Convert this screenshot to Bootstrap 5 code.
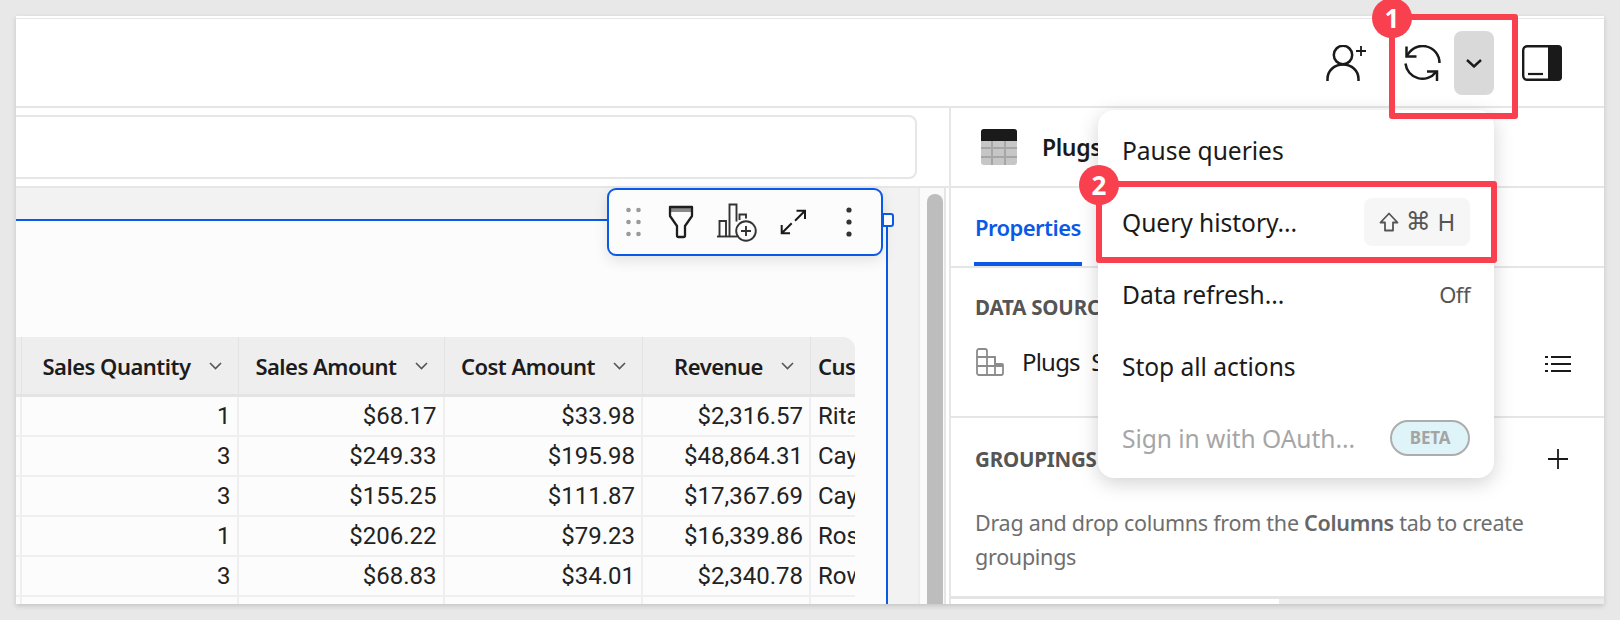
<!DOCTYPE html>
<html lang="en">
<head>
<meta charset="utf-8">
<title>Query history</title>
<link rel="stylesheet" href="https://cdn.jsdelivr.net/npm/bootstrap@5.3.0/dist/css/bootstrap.min.css">
<style>
:root{--ui:"Noto Sans","Liberation Sans",sans-serif;--blue:#0a5ae6;--red:#f9404f;--ln:#e6e6e6}
html,body{margin:0;height:620px;overflow:hidden;background:#e8e8e8}
body{font-family:var(--ui);color:#1a1a1a}
.stage{position:relative;width:1620px;height:620px;overflow:hidden}
.win{position:absolute;left:16px;top:16px;width:1588px;height:588px;background:#fff;overflow:hidden;box-shadow:0 2px 5px rgba(0,0,0,.16);border-top:2px solid #fff}
.topbar{height:90px;border-top:1px solid var(--ln);border-bottom:2px solid var(--ln);padding-left:1310px;padding-top:26px;gap:0}
.topbar svg{display:block;flex:none}
.chev-btn{width:40px;height:64px;background:#d9d9d9;border-radius:8px;margin:-14px 28px 0 12px}
.body-split{height:496px}
.leftcol{width:933px;flex:none}
.searchstrip{height:80px;padding:7px 32px 7px 0;border-bottom:2px solid var(--ln)}
.searchbox{height:64px;background:#fff;border:2px solid var(--ln);border-left:0;border-radius:0 8px 8px 0}
.canvasrow{height:416px}
.canvas{width:904px;background:#f2f2f2;padding:31px 30px 0 0;border-right:2px solid #ececec;flex:none}
.gutter{width:26px;flex:none;padding:6px 2px 0 7px;border-right:2px solid var(--ln);background:#fafafa}
.thumb{width:16px;height:100%;background:#bdbdbd;border-radius:8px 8px 0 0}
.element{position:relative;height:100%;background:#fcfcfc;border-top:2px solid var(--blue);border-right:2px solid var(--blue);padding-top:116px}
.grid-wrap{width:839px;overflow:hidden;border-radius:0 12px 0 0}
table.dt{table-layout:fixed;width:839px;border-collapse:separate;border-spacing:0;margin:0}
.dt th{height:60px;background:#eeeeee;border-right:1px solid #e3e3e3;border-bottom:3px solid #e4e4e4;font:600 22px var(--ui);letter-spacing:-.5px;color:#1c1c1c;padding:0;white-space:nowrap;overflow:hidden}
.dt td{height:40px;border-right:2px solid #efefef;border-bottom:2px solid #efefef;font:400 24px Roboto,sans-serif;color:#222;padding:0 6px;text-align:right;white-space:nowrap;overflow:hidden}
.dt td.txt,.dt th.txt{text-align:left;padding-left:7px;border-right:0}
.dt td.sliver,.dt th.sliver{padding:0}
.th-in{display:flex;justify-content:flex-end;align-items:center;gap:18px;padding-right:16px}
.tool{position:absolute;left:591px;top:-33px;width:276px;height:68px;background:#fcfcfc;border:2px solid var(--blue);border-radius:9px;box-shadow:0 5px 14px rgba(0,0,0,.1)}
.grab{position:absolute;left:866px;top:-8px;width:12px;height:14px;background:#fcfcfc;border:2px solid var(--blue);border-radius:0 3px 3px 0}
.panel{width:655px;flex:none;border-left:2px solid var(--ln)}
.p-head{height:80px;border-bottom:2px solid var(--ln);padding-left:30px;gap:25px}
.p-title{font-weight:600;font-size:23px;letter-spacing:-.4px}
.p-tabs{height:80px;border-bottom:2px solid var(--ln);padding-left:23px}
.tab-on{height:100%;display:flex;align-items:center;border-bottom:4px solid var(--blue);margin-bottom:-2px;padding:5px 1px 0;color:var(--blue);font-weight:600;font-size:22px;letter-spacing:-.55px}
.p-src{height:150px;border-bottom:2px solid var(--ln);padding:26px 33px 0 24px}
.sec-h{font-weight:700;font-size:20.5px;letter-spacing:-.2px;color:#555;line-height:26px}
.src-row{margin-top:24px;gap:18px;font-size:24px;letter-spacing:-.8px;word-spacing:6px;padding-left:1px}
.p-grp{height:181px;padding:28px 33px 0 24px;border-bottom:3px solid #e4e4e4}
.grp-txt{margin-top:34px;width:570px;font-size:21.5px;letter-spacing:-.27px;line-height:34px;color:#6e6e6e}
.grp-txt b{font-weight:600;color:#666}
.p-tail{height:10px}
.p-tail i{display:block;width:328px;background:#fff;flex:none}
.p-tail u{display:block;flex:1;background:#ececec}
.qmenu{position:absolute;left:1098px;top:110px;width:396px;height:368px;background:#fff;border-radius:16px;box-shadow:0 5px 20px rgba(0,0,0,.18);padding:5px 24px 0}
.qitem{height:72px;font-size:24.6px;letter-spacing:-.05px;color:#1a1a1a}
.qitem.dim{color:#a6a6a6}
.kbd-chip{width:106px;height:48px;background:#f6f6f6;border-radius:8px;font:400 25px "DejaVu Sans",sans-serif;color:#555;gap:7px;margin-top:-3px}
.kbd-chip span:last-child{font:400 24px var(--ui)}
.q-off{font-size:22px;color:#555;letter-spacing:-.5px;margin-top:-2px}
.beta{width:80px;height:36px;border:2px solid #adadad;border-radius:18px;background:#dff4f8;color:#a4a4a4;font-weight:700;font-size:17px;letter-spacing:-.2px;margin-top:-2px}
.redbox{position:absolute;border:6px solid var(--red);border-radius:3px}
.rb1{left:1389px;top:14px;width:129px;height:105px}
.rb2{left:1096px;top:181px;width:401px;height:82px}
.dot{position:absolute;width:40px;height:40px;border-radius:50%;background:var(--red);color:#fff;font:700 26px/40px var(--ui);text-align:center}
.d1{left:1372px;top:-2px}
.d2{left:1079px;top:165px}
</style>
</head>
<body>
<div class="stage">
  <div class="win">
    <header class="topbar d-flex align-items-start">
      <svg width="40" height="37" viewBox="0 0 40 37" fill="none" stroke="#1a1a1a" stroke-width="2.5"><circle cx="17" cy="10" r="9.200"/><path d="M1.500 36v-2C1.500 26 8 19.500 17 19.500s15.500 6.500 15.500 14.500v2"/><path d="M30 6h10M35 1v10" stroke-width="1.800"/></svg>
      <svg width="38" height="37" viewBox="0 0 38 37" fill="none" stroke="#1a1a1a" stroke-width="2.500" style="margin-left:38px"><path d="M3 11A17 17 0 0 1 35.500 18"/><path d="M1.500 18.500A17 17 0 0 0 32 27"/><path d="M2.500 1.500V11.500H12.500"/><path d="M23 26.500H33V36"/></svg>
      <div class="chev-btn d-flex align-items-center justify-content-center"><svg width="16" height="9" viewBox="0 0 16 9" fill="none" stroke="#1a1a1a" stroke-width="2.400"><path d="M1 1l7 6.500L15 1"/></svg></div>
      <svg width="40" height="36" viewBox="0 0 40 36"><rect x="1.200" y="1.200" width="37.600" height="33.600" rx="4" fill="#fff" stroke="#1a1a1a" stroke-width="2.400"/><path d="M26 0h10a4 4 0 0 1 4 4v28a4 4 0 0 1-4 4H26z" fill="#1a1a1a"/><path d="M6 29h15" stroke="#1a1a1a" stroke-width="2.200"/></svg>
    </header>
    <div class="body-split d-flex">
      <div class="leftcol">
        <div class="searchstrip"><div class="searchbox"></div></div>
        <div class="canvasrow d-flex">
          <div class="canvas">
            <div class="element">
              <div class="grid-wrap">
                <table class="dt">
                  <colgroup><col style="width:6px"><col style="width:216.500px"><col style="width:206px"><col style="width:198.500px"><col style="width:168px"><col style="width:44px"></colgroup>
                  <thead><tr>
                    <th class="sliver"></th>
                    <th><div class="th-in">Sales Quantity<svg width="13" height="8" viewBox="0 0 13 8" fill="none" stroke="#555" stroke-width="1.600"><path d="M1 1l5.500 5.500L12 1"/></svg></div></th>
                    <th><div class="th-in">Sales Amount<svg width="13" height="8" viewBox="0 0 13 8" fill="none" stroke="#555" stroke-width="1.600"><path d="M1 1l5.500 5.500L12 1"/></svg></div></th>
                    <th><div class="th-in">Cost Amount<svg width="13" height="8" viewBox="0 0 13 8" fill="none" stroke="#555" stroke-width="1.600"><path d="M1 1l5.500 5.500L12 1"/></svg></div></th>
                    <th><div class="th-in">Revenue<svg width="13" height="8" viewBox="0 0 13 8" fill="none" stroke="#555" stroke-width="1.600"><path d="M1 1l5.500 5.500L12 1"/></svg></div></th>
                    <th class="txt">Customer</th>
                  </tr></thead>
                  <tbody>
                    <tr><td class="sliver"></td><td>1</td><td>$68.17</td><td>$33.98</td><td>$2,316.57</td><td class="txt">Rita</td></tr>
                    <tr><td class="sliver"></td><td>3</td><td>$249.33</td><td>$195.98</td><td>$48,864.31</td><td class="txt">Cayla</td></tr>
                    <tr><td class="sliver"></td><td>3</td><td>$155.25</td><td>$111.87</td><td>$17,367.69</td><td class="txt">Cayla</td></tr>
                    <tr><td class="sliver"></td><td>1</td><td>$206.22</td><td>$79.23</td><td>$16,339.86</td><td class="txt">Rose</td></tr>
                    <tr><td class="sliver"></td><td>3</td><td>$68.83</td><td>$34.01</td><td>$2,340.78</td><td class="txt">Rowan</td></tr>
                    <tr><td class="sliver"></td><td>2</td><td>$120.19</td><td>$59.96</td><td>$6,041.48</td><td class="txt">Rita</td></tr>
                  </tbody>
                </table>
              </div>
              <div class="tool">
                <svg width="272" height="64" viewBox="0 0 272 64" fill="none" style="display:block">
                  <g fill="#9a9a9a"><circle cx="19.500" cy="20" r="2.300"/><circle cx="29.500" cy="20" r="2.300"/><circle cx="19.500" cy="32" r="2.300"/><circle cx="29.500" cy="32" r="2.300"/><circle cx="19.500" cy="44" r="2.300"/><circle cx="29.500" cy="44" r="2.300"/></g>
                  <path d="M61 18h22v4H61z" fill="#8a8a8a"/>
                  <path d="M61 17h22v9l-7 10v9.500a1.500 1.500 0 0 1-1.500 1.500h-5a1.500 1.500 0 0 1-1.500-1.500V36l-7-10z" stroke="#1e1e1e" stroke-width="2.300" stroke-linejoin="round"/>
                  <g stroke="#333" stroke-width="1.900"><path d="M108 46.500h20"/><path d="M110.500 46.500V31h6.500v15.500M120.500 46.500V14.500h7v17M130.500 30V24.500h6.500v4"/><circle cx="137" cy="41" r="9.800" fill="#fcfcfc"/><path d="M137 36v10M132 41h10"/></g>
                  <g stroke="#1a1a1a" stroke-width="2"><path d="M196 20.700l-10 10M187.500 20.700H196V29"/><path d="M172.700 43.300l10-10M172.700 35v8.300H181"/></g>
                  <g fill="#333"><circle cx="240" cy="20" r="2.600"/><circle cx="240" cy="32" r="2.600"/><circle cx="240" cy="44" r="2.600"/></g>
                </svg>
              </div>
              <div class="grab"></div>
            </div>
          </div>
          <div class="gutter"><div class="thumb"></div></div>
        </div>
      </div>
      <aside class="panel">
        <div class="p-head d-flex align-items-center">
          <svg width="36" height="36" viewBox="0 0 36 36"><rect width="36" height="36" rx="3" fill="#c6c6c6"/><path d="M3 0h30a3 3 0 0 1 3 3v9H0V3a3 3 0 0 1 3-3z" fill="#1a1a1a"/><path d="M0 19h36M0 28h36M11 12v24M24 12v24" stroke="#a6a6a6" stroke-width="2"/></svg>
          <span class="p-title">Plugs Sales</span>
        </div>
        <div class="p-tabs d-flex"><div class="tab-on">Properties</div></div>
        <div class="p-src">
          <div class="sec-h">DATA SOURCE</div>
          <div class="src-row d-flex align-items-center">
            <svg width="28" height="28" viewBox="0 0 28 28" fill="none" stroke="#8c8c8c" stroke-width="1.800"><path d="M1 3a2 2 0 0 1 2-2h6a2 2 0 0 1 2 2v6h8v7h7a1 1 0 0 1 1 1v8a2 2 0 0 1-2 2H3a2 2 0 0 1-2-2z"/><path d="M1 9h10v18M1 18h26M19 9v18"/></svg>
            <span>Plugs Sales</span>
            <svg class="ms-auto" width="26" height="18" viewBox="0 0 26 18" fill="none" stroke="#1a1a1a" stroke-width="2" style="margin-top:4px"><path d="M6 2h20M6 9h20M6 16h20M0 2h3M0 9h3M0 16h3"/></svg>
          </div>
        </div>
        <div class="p-grp">
          <div class="d-flex align-items-center justify-content-between"><span class="sec-h">GROUPINGS</span><svg width="20" height="20" viewBox="0 0 20 20" stroke="#1a1a1a" stroke-width="1.800" style="margin-right:3px"><path d="M0 10h20M10 0v20"/></svg></div>
          <div class="grp-txt">Drag and drop columns from the <b>Columns</b> tab to create groupings</div>
        </div>
        <div class="p-tail d-flex"><i></i><u></u></div>
      </aside>
    </div>
  </div>

  <div class="qmenu">
    <div class="qitem d-flex align-items-center justify-content-between"><span>Pause queries</span></div>
    <div class="qitem d-flex align-items-center justify-content-between"><span>Query history...</span><div class="kbd-chip d-flex align-items-center justify-content-center"><svg width="20" height="20" viewBox="0 0 20 20" fill="none" stroke="#555" stroke-width="1.800" stroke-linejoin="round"><path d="M10 1.500L18.500 10.500H14V18.500H6V10.500H1.500z"/></svg><span>⌘</span><span>H</span></div></div>
    <div class="qitem d-flex align-items-center justify-content-between"><span>Data refresh...</span><span class="q-off">Off</span></div>
    <div class="qitem d-flex align-items-center justify-content-between"><span>Stop all actions</span></div>
    <div class="qitem dim d-flex align-items-center justify-content-between"><span>Sign in with OAuth...</span><span class="beta d-flex align-items-center justify-content-center">BETA</span></div>
  </div>

  <div class="redbox rb1"></div>
  <div class="redbox rb2"></div>
  <div class="dot d1">1</div>
  <div class="dot d2">2</div>
</div>
<script src="https://cdn.jsdelivr.net/npm/bootstrap@5.3.0/dist/js/bootstrap.bundle.min.js"></script>
</body>
</html>
